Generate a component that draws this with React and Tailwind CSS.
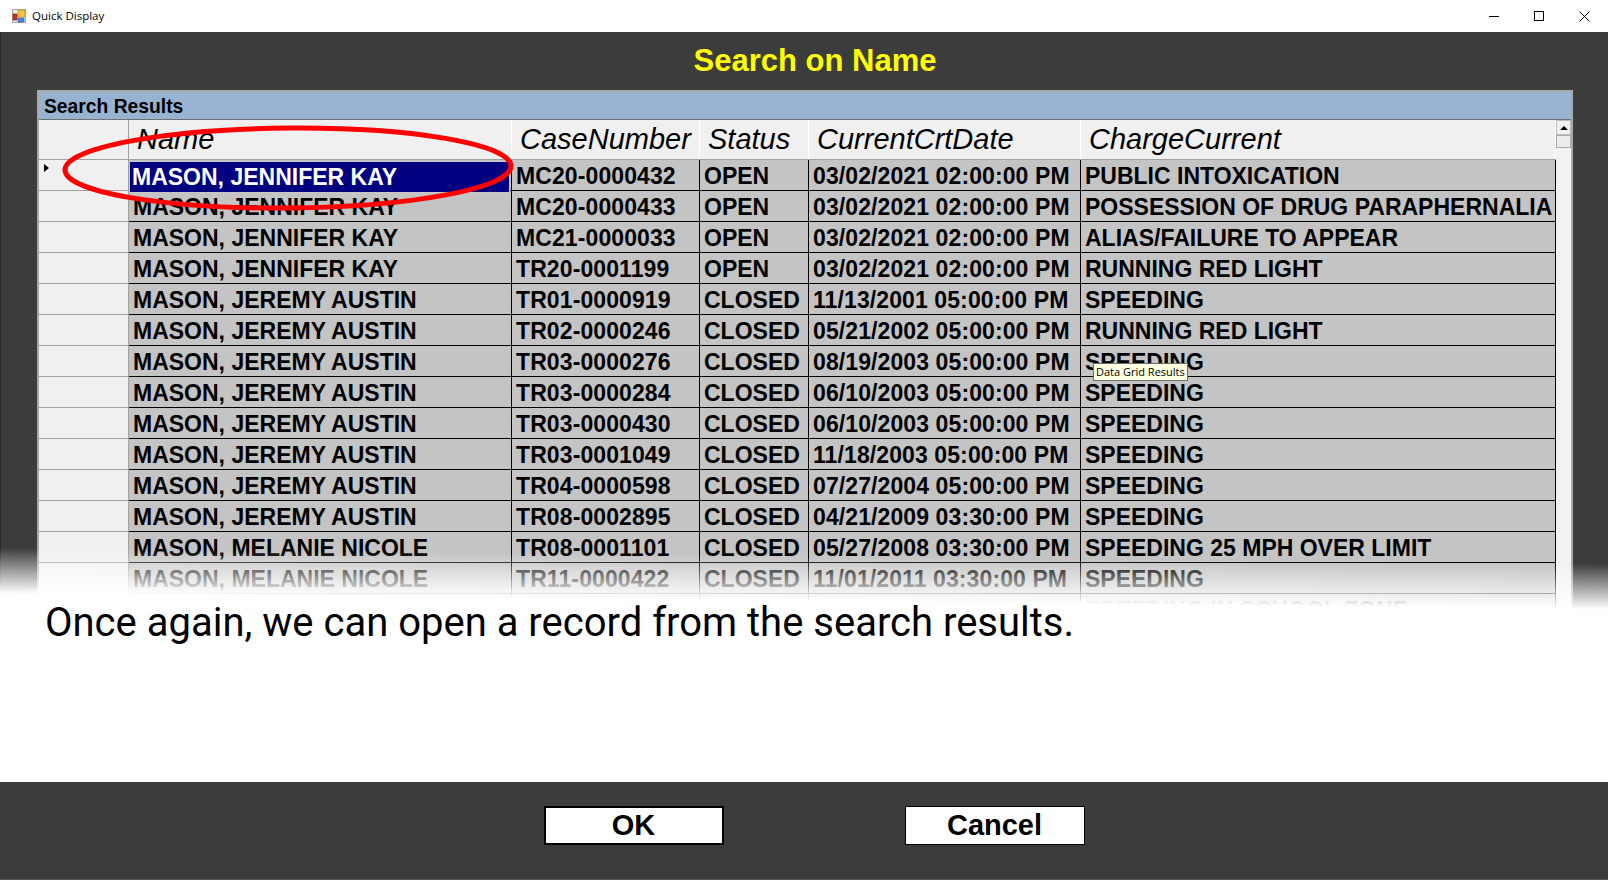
const rows = [
  ["MASON, JENNIFER KAY", "MC20-0000432", "OPEN", "03/02/2021 02:00:00 PM", "PUBLIC INTOXICATION"],
  ["MASON, JENNIFER KAY", "MC20-0000433", "OPEN", "03/02/2021 02:00:00 PM", "POSSESSION OF DRUG PARAPHERNALIA"],
  ["MASON, JENNIFER KAY", "MC21-0000033", "OPEN", "03/02/2021 02:00:00 PM", "ALIAS/FAILURE TO APPEAR"],
  ["MASON, JENNIFER KAY", "TR20-0001199", "OPEN", "03/02/2021 02:00:00 PM", "RUNNING RED LIGHT"],
  ["MASON, JEREMY AUSTIN", "TR01-0000919", "CLOSED", "11/13/2001 05:00:00 PM", "SPEEDING"],
  ["MASON, JEREMY AUSTIN", "TR02-0000246", "CLOSED", "05/21/2002 05:00:00 PM", "RUNNING RED LIGHT"],
  ["MASON, JEREMY AUSTIN", "TR03-0000276", "CLOSED", "08/19/2003 05:00:00 PM", "SPEEDING"],
  ["MASON, JEREMY AUSTIN", "TR03-0000284", "CLOSED", "06/10/2003 05:00:00 PM", "SPEEDING"],
  ["MASON, JEREMY AUSTIN", "TR03-0000430", "CLOSED", "06/10/2003 05:00:00 PM", "SPEEDING"],
  ["MASON, JEREMY AUSTIN", "TR03-0001049", "CLOSED", "11/18/2003 05:00:00 PM", "SPEEDING"],
  ["MASON, JEREMY AUSTIN", "TR04-0000598", "CLOSED", "07/27/2004 05:00:00 PM", "SPEEDING"],
  ["MASON, JEREMY AUSTIN", "TR08-0002895", "CLOSED", "04/21/2009 03:30:00 PM", "SPEEDING"],
  ["MASON, MELANIE NICOLE", "TR08-0001101", "CLOSED", "05/27/2008 03:30:00 PM", "SPEEDING 25 MPH OVER LIMIT"],
  ["MASON, MELANIE NICOLE", "TR11-0000422", "CLOSED", "11/01/2011 03:30:00 PM", "SPEEDING"],
  ["", "", "", "", "SPEEDING IN SCHOOL ZONE"],
];

const headers = [
  ["Name", "w-[383px]"],
  ["CaseNumber", "w-[188px]"],
  ["Status", "w-[109px]"],
  ["CurrentCrtDate", "w-[272px]"],
  ["ChargeCurrent", "w-[475px]"],
];
const widths = ["w-[383px]", "w-[188px]", "w-[109px]", "w-[272px]", "w-[475px]"];

function AppIcon() {
  return (
    <svg width="14" height="14" viewBox="0 0 14 14" className="shrink-0">
      <rect x="0.5" y="0.5" width="13" height="13" fill="#e8e8e8" stroke="#a8a8a8" />
      <rect x="6" y="1" width="7" height="7" fill="#f5c542" stroke="#b98a1e" strokeWidth="0.6" />
      <rect x="1" y="5" width="4" height="6" fill="#c8322b" stroke="#7d1a16" strokeWidth="0.6" />
      <rect x="6" y="9" width="6" height="4" fill="#4f86d6" stroke="#2a5ba5" strokeWidth="0.6" />
    </svg>
  );
}

export default function App() {
  return (
    <div className="relative w-[1608px] h-[880px] overflow-hidden flex flex-col bg-white font-['Liberation_Sans',sans-serif]">
      <div className="h-8 shrink-0 flex items-center bg-white pl-3">
        <AppIcon />
        <span className="ml-[6px] text-[11.5px] text-black font-['Open_Sans',sans-serif]">Quick Display</span>
        <div className="ml-auto flex items-center gap-[35px] pr-[18px]">
          <svg width="10" height="10" viewBox="0 0 10 10"><path d="M0 5.5H10" stroke="#000" /></svg>
          <svg width="10" height="10" viewBox="0 0 10 10"><rect x="0.5" y="0.5" width="9" height="9" fill="none" stroke="#000" /></svg>
          <svg width="11" height="11" viewBox="0 0 11 11"><path d="M0.5 0.5L10.5 10.5M10.5 0.5L0.5 10.5" stroke="#000" /></svg>
        </div>
      </div>

      <div className="flex-1 min-h-0 flex flex-col bg-[#3c3c3c] border-l border-[#262a33]">
        <h1 className="h-[58px] shrink-0 flex items-center justify-center pl-[21px] text-[#ffff00] text-[31px] font-bold">Search on Name</h1>
        <div className="relative ml-[36px] w-[1536px] flex-1 min-h-0 border-2 border-[#a9a9a9] border-b-0 bg-[#f0f0f0] flex flex-col overflow-hidden">
          <div className="h-[28px] shrink-0 bg-[#98b3d1] border-b border-[#707070] flex items-center pl-[5px] pt-[3px] text-[19.3px] font-bold text-black">Search Results</div>
          <div className="flex-1 min-h-0 flex">
            <div className="w-[1517px] shrink-0">
              <div className="h-[40px] flex items-center bg-[#f0f0f0] border-b border-[#a0a0a0]">
                <div className="w-[90px] h-full border-r border-[#a0a0a0]" />
                {headers.map(([h, w]) => (
                  <div key={h} className={`${w} h-full flex items-center pl-[8px] border-r border-white text-[29px] italic text-black whitespace-nowrap`}>{h}</div>
                ))}
              </div>
              {rows.map((r, i) => (
                <div key={i} className="h-[31px] flex">
                  <div className="relative w-[90px] h-full bg-[#f0f0f0] border-r border-b border-[#a0a0a0]">
                    {i === 0 && <div className="absolute left-[5px] top-[4px] w-0 h-0 border-y-[4px] border-y-transparent border-l-[5px] border-l-black" />}
                  </div>
                  {r.map((c, j) => (
                    <div key={j} className={`${widths[j]} h-full flex bg-[#c4c4c4] border-r border-b border-black pt-[2px] whitespace-nowrap text-[23px] font-bold text-black pl-[4px] ${j === 1 || j === 3 ? "tracking-[0.1px]" : ""} ${i === 0 && j === 0 ? "items-start" : "items-center"}`}>
                      {i === 0 && j === 0 ? (
                        <span className="relative z-10 w-[379px] h-[30px] -ml-[3px] pl-[2px] flex items-center bg-[#000080] text-white outline-dotted outline-1 outline-[#cccccc]">{c}</span>
                      ) : c}
                    </div>
                  ))}
                </div>
              ))}
            </div>
            <div className="flex-1 flex flex-col bg-[#f2f2f2]">
              <div className="h-[15px] flex items-center justify-center bg-[#f0f0f0] border border-[#bbbbbb]">
                <div className="w-0 h-0 border-x-[4px] border-x-transparent border-b-[4px] border-b-black" />
              </div>
              <div className="h-[13px] bg-[#ececec] border border-[#a8a8a8]" />
            </div>
          </div>
          <div className="absolute left-[1054px] top-[271px] h-[18px] px-[2px] flex items-center bg-[#ffffe1] border border-[#6d6d6d] text-[11px] text-black font-['Open_Sans',sans-serif] whitespace-nowrap">Data Grid Results</div>
        </div>
      </div>

      <svg className="absolute z-20 left-[60px] top-[120px]" width="460" height="96" viewBox="0 0 460 96">
        <ellipse cx="228" cy="48" rx="223" ry="40" fill="none" stroke="#ff0000" strokeWidth="5" transform="rotate(-0.5 228 48)" />
      </svg>

      <div className="absolute z-20 left-0 right-0 top-[547px] h-[235px] flex flex-col">
        <div className="h-[76px] shrink-0 bg-[linear-gradient(180.57deg,rgba(255,255,255,0)_18%,#ffffff_68%)]" />
        <div className="flex-1 bg-white pl-[45px]">
          <p className="-mt-[24px] text-[40px] leading-[48px] text-black font-['Roboto',sans-serif]">Once again, we can open a record from the search results.</p>
        </div>
      </div>

      <div className="absolute z-20 left-0 right-0 bottom-0 h-[98px] bg-[#3c3c3c] border-b border-[#555555] flex items-center justify-center gap-[181px] pl-[20px] pb-[11px]">
        <button className="w-[180px] h-[39px] bg-white border-2 border-black text-[29px] font-bold text-black leading-none">OK</button>
        <button className="w-[180px] h-[39px] bg-white border border-black text-[29px] font-bold text-black leading-none">Cancel</button>
      </div>
    </div>
  );
}
